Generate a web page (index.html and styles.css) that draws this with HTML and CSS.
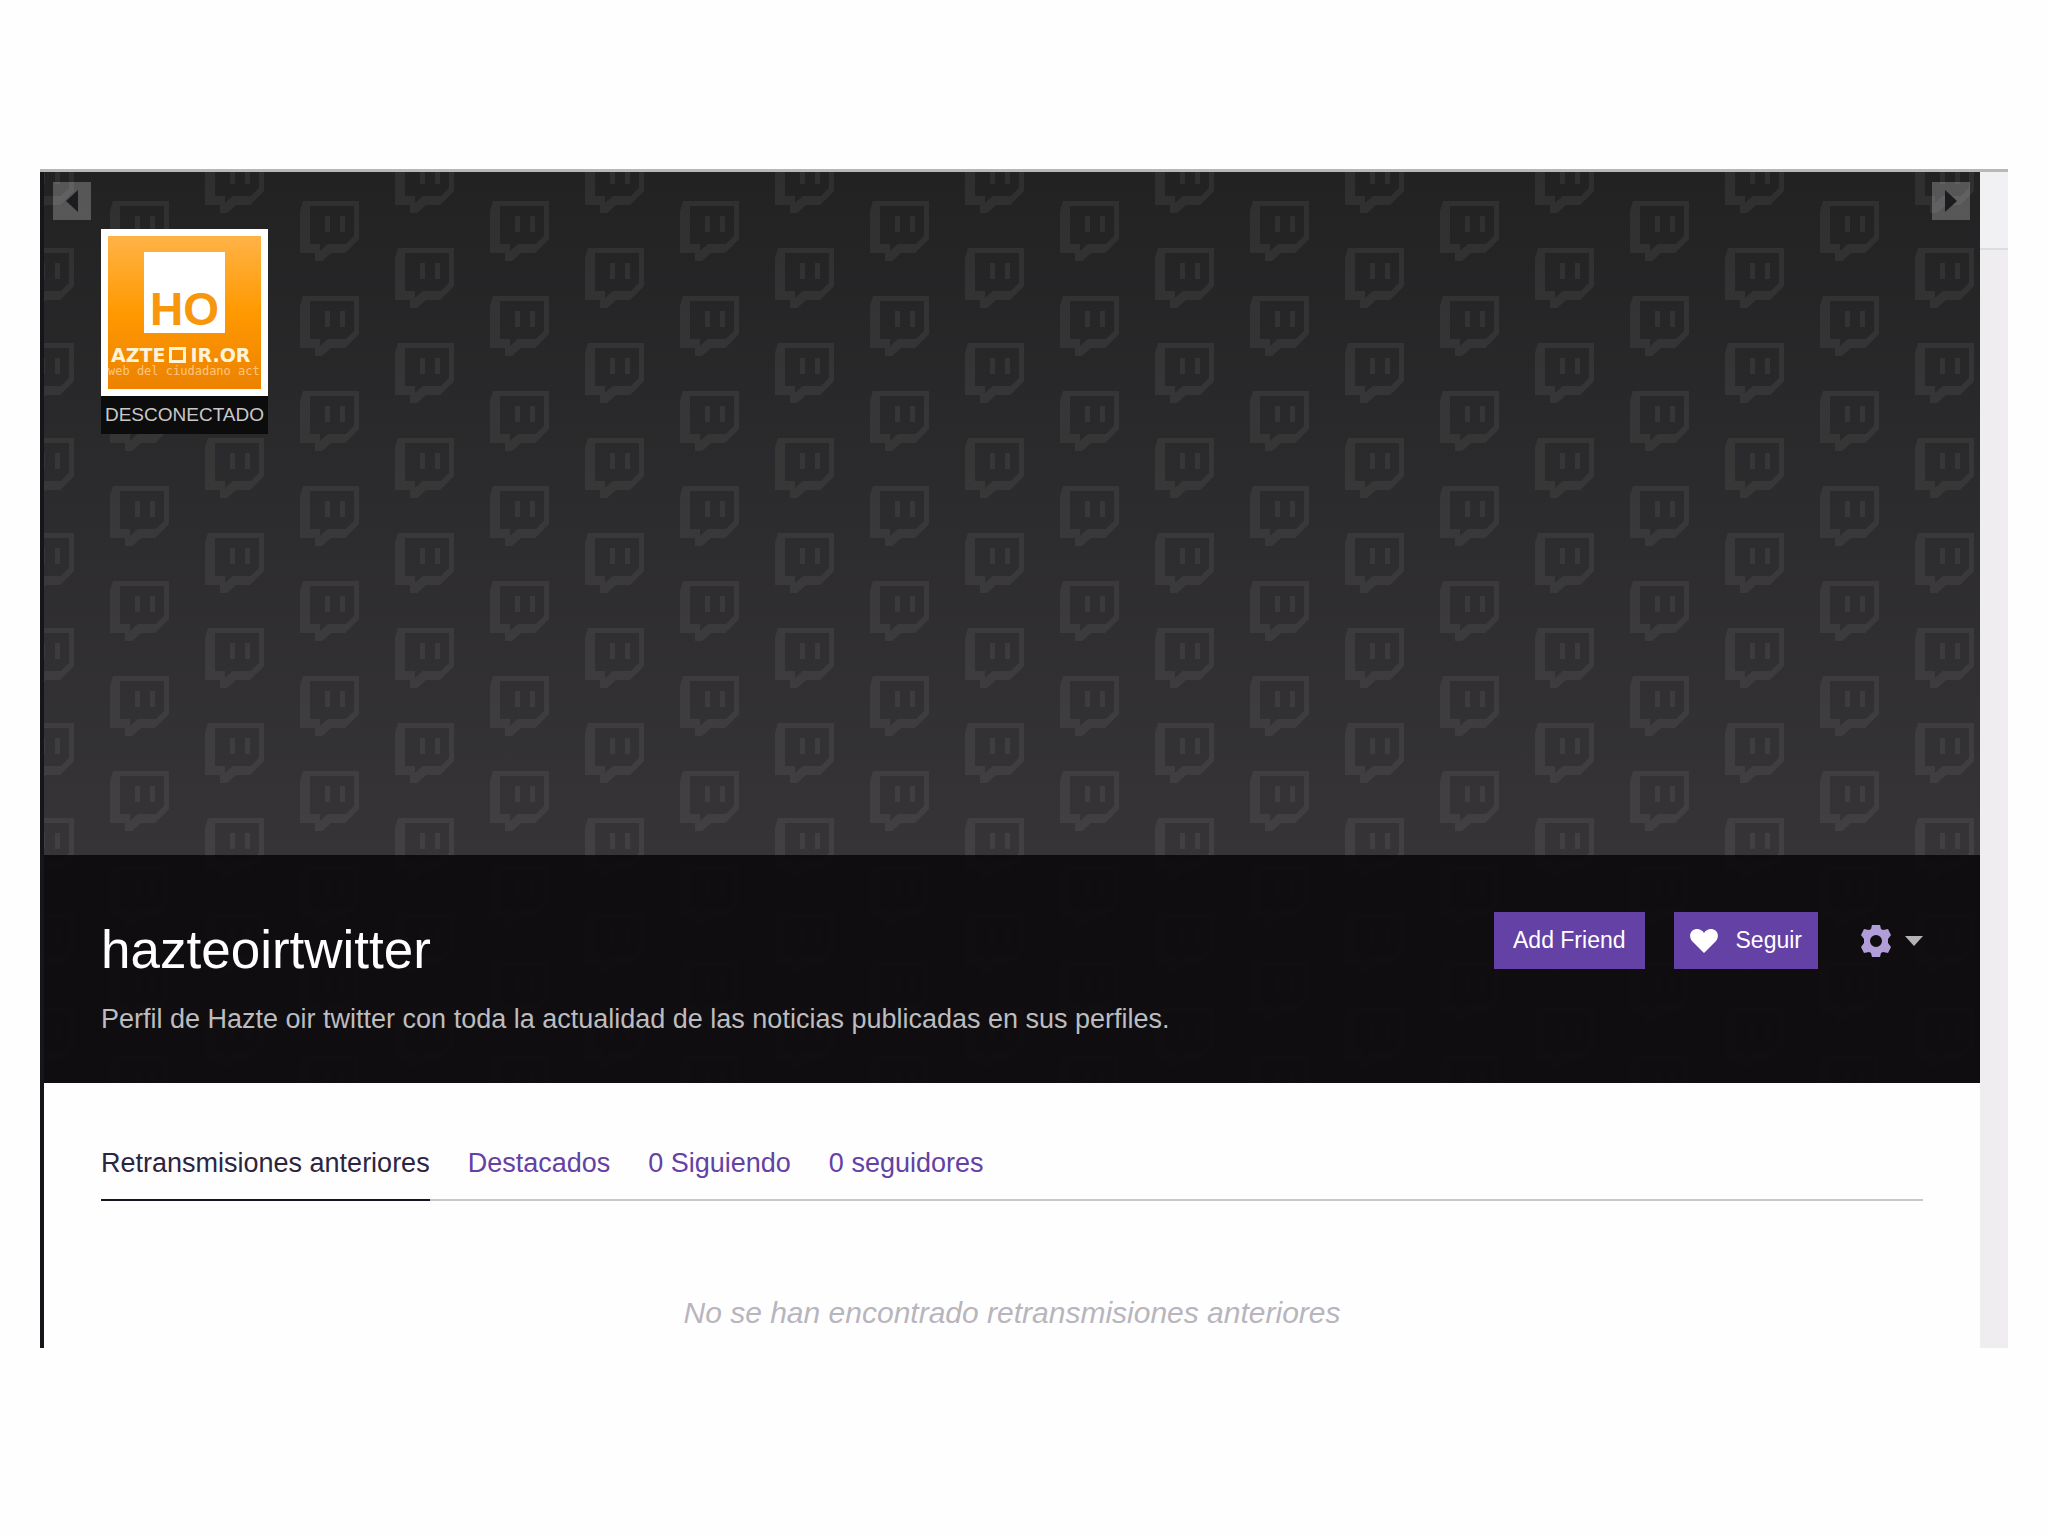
FILE: index.html
```html
<!DOCTYPE html>
<html lang="es">
<head>
    <meta charset="UTF-8">
    <meta name="viewport" content="width=device-width, initial-scale=1.0">
    <title>hazteoirtwitter</title>
    <link rel="stylesheet" href="styles.css">
</head>
<body>
    <div class="frame">
        <main class="channel">
            <header class="banner">
                <svg class="banner-pattern" aria-hidden="true">
                    <defs>
                        <g id="glitch">
                            <path fill-rule="evenodd" d="M3 0H59V38L45 52H31L22 60H15V52H0V10ZM10 5V43H20V50L28 43H46L54 35V5Z"/>
                            <path d="M25 15h5v16h-5zM40 15h5v16h-5z"/>
                        </g>
                        <pattern id="glitches" width="190" height="95" patternUnits="userSpaceOnUse">
                            <use href="#glitch" x="66" y="29"/>
                            <use href="#glitch" x="161" y="76"/>
                            <use href="#glitch" x="-29" y="76"/>
                            <use href="#glitch" x="161" y="-19"/>
                            <use href="#glitch" x="-29" y="-19"/>
                        </pattern>
                    </defs>
                    <rect width="100%" height="100%" fill="url(#glitches)"/>
                </svg>
                <button type="button" class="arrow arrow-left" aria-label="Anterior">
                    <svg width="12" height="22" viewBox="0 0 12 22"><path d="M12 0V22L0 11Z"/></svg>
                </button>
                <button type="button" class="arrow arrow-right" aria-label="Siguiente">
                    <svg width="12" height="22" viewBox="0 0 12 22"><path d="M0 0V22L12 11Z"/></svg>
                </button>
                <div class="cover">
                    <div class="profile">
                        <div class="avatar">
                            <div class="logo-box">HO</div>
                            <div class="logo-name">AZTE<span class="logo-o"></span>IR.OR</div>
                            <div class="logo-tagline">web del ciudadano act</div>
                        </div>
                        <div class="status">DESCONECTADO</div>
                    </div>
                </div>
                <div class="info">
                    <div class="about">
                        <h1>hazteoirtwitter</h1>
                        <p>Perfil de Hazte oir twitter con toda la actualidad de las noticias publicadas en sus perfiles.</p>
                    </div>
                    <div class="actions">
                        <button type="button" class="btn">Add Friend</button>
                        <button type="button" class="btn btn-follow">
                            <svg width="28" height="24" viewBox="0 0 28 24"><path d="M14 24L2 12C-1 8 0 4 2 2C5-1 11-1 14 4C17-1 23-1 26 2C28 4 29 8 26 12Z"/></svg>
                            Seguir
                        </button>
                        <button type="button" class="settings" aria-label="Opciones">
                            <svg width="30" height="32" viewBox="0 0 30 32" class="gear"><path fill-rule="evenodd" d="M11 0H19L20 4L22 5L27 4L30 10L27 14V18L30 22L27 28L22 27L20 28L19 32H11L10 28L8 27L3 28L0 22L3 18V14L0 10L3 4L8 5L10 4ZM15 10A6 6 0 1 0 15 22A6 6 0 1 0 15 10Z"/></svg>
                            <svg width="18" height="10" viewBox="0 0 18 10" class="caret"><path d="M0 0H18L9 10Z"/></svg>
                        </button>
                    </div>
                </div>
            </header>
            <section class="content">
                <nav class="tabs">
                    <a href="#" class="active">Retransmisiones anteriores</a>
                    <a href="#">Destacados</a>
                    <a href="#">0 Siguiendo</a>
                    <a href="#">0 seguidores</a>
                </nav>
                <p class="empty">No se han encontrado retransmisiones anteriores</p>
            </section>
        </main>
        <aside class="side">
            <div class="side-top"></div>
        </aside>
    </div>
</body>
</html>
```
FILE: styles.css
```css
:root {
    --purple: #6441a5;
    --side-color: #efedf0;
    --line-color: #c8c8c8;
}

* {
    box-sizing: border-box;
}

body {
    margin: 0;
    padding: 169px 40px 40px;
    background-color: #fefefe;
    font-family: "Liberation Sans", Arial, sans-serif;
}

h1, p {
    margin: 0;
    font-weight: normal;
}

button {
    border: none;
    padding: 0;
    font-family: inherit;
    cursor: pointer;
}

.frame {
    display: flex;
    border-top: 3px solid #b8b8b8;
}

.channel {
    flex: 1;
    min-width: 0;
    border-left: 4px solid #14161a;
}

/* Banner */
.banner {
    position: relative;
    background: linear-gradient(#222223, #363437 75%);
}

.banner-pattern {
    position: absolute;
    inset: 0;
    width: 100%;
    height: 100%;
    fill: rgba(255, 255, 255, 0.06);
}

.arrow {
    position: absolute;
    top: 10px;
    width: 38px;
    height: 38px;
    display: flex;
    align-items: center;
    justify-content: center;
    background-color: rgba(255, 255, 255, 0.24);
    fill: #1c1c1e;
}

.arrow-left {
    left: 9px;
}

.arrow-right {
    right: 10px;
}

.cover {
    position: relative;
    min-height: 683px;
    padding: 57px;
    pointer-events: none;
}

.profile {
    width: 167px;
}

.avatar {
    height: 167px;
    padding-top: 16px;
    border: 7px solid #fff;
    background: linear-gradient(#ffb347, #ff9900 50%, #ec8200);
    overflow: hidden;
    white-space: nowrap;
}

.logo-box {
    display: flex;
    justify-content: center;
    width: 81px;
    height: 81px;
    margin: 0 auto;
    padding-top: 33px;
    background-color: #fff;
    color: #f8960c;
    font-size: 46px;
    line-height: 48px;
    font-weight: bold;
}

.logo-name {
    display: flex;
    align-items: center;
    margin-top: 12px;
    padding-left: 3px;
    color: #fff3d8;
    font-family: "DejaVu Sans", sans-serif;
    font-size: 19px;
    line-height: 20px;
    font-weight: bold;
}

.logo-o {
    width: 17px;
    height: 16px;
    margin: 0 4px;
    border: 3px solid #fff3d8;
    flex-shrink: 0;
}

.logo-tagline {
    color: #ffc680;
    font-family: "DejaVu Sans Mono", monospace;
    font-size: 12px;
    line-height: 12px;
}

.status {
    background-color: #0c0c0d;
    color: #c8c8c8;
    font-size: 19px;
    line-height: 38px;
    text-align: center;
}

.info {
    position: relative;
    display: flex;
    justify-content: space-between;
    align-items: flex-start;
    padding: 57px 57px 46px;
    background-color: rgba(11, 9, 12, 0.9);
}

.about {
    padding-top: 8px;
}

.about h1 {
    color: #fff;
    font-size: 53px;
    line-height: 60px;
}

.about p {
    margin-top: 21px;
    color: #bdbcbf;
    font-size: 27px;
    line-height: 36px;
}

.actions {
    display: flex;
    gap: 29px;
}

.btn {
    height: 57px;
    padding: 0 19px;
    background-color: var(--purple);
    color: #fff;
    font-size: 23px;
}

.btn-follow {
    display: flex;
    align-items: center;
    gap: 18px;
    padding: 0 16px;
    fill: #fff;
}

.settings {
    display: flex;
    align-items: center;
    gap: 14px;
    margin-left: 14px;
    background: none;
}

.gear {
    fill: #b19dd8;
}

.caret {
    fill: #b4b4b4;
}

/* Content */
.content {
    padding: 62px 57px 15px;
}

.tabs {
    display: flex;
    gap: 38px;
    box-shadow: inset 0 -2px var(--line-color);
}

.tabs a {
    padding-bottom: 18px;
    border-bottom: 2px solid transparent;
    color: var(--purple);
    font-size: 27px;
    line-height: 36px;
    text-decoration: none;
}

.tabs .active {
    border-bottom-color: #17141f;
    color: #2c2541;
}

.empty {
    margin-top: 92px;
    color: #b8b5bd;
    font-size: 30px;
    line-height: 40px;
    font-style: italic;
    text-align: center;
}

/* Right strip */
.side {
    width: 28px;
    background-color: var(--side-color);
}

.side-top {
    height: 78px;
    background-color: #f1f0f2;
    border-bottom: 2px solid #dddcde;
}
```
